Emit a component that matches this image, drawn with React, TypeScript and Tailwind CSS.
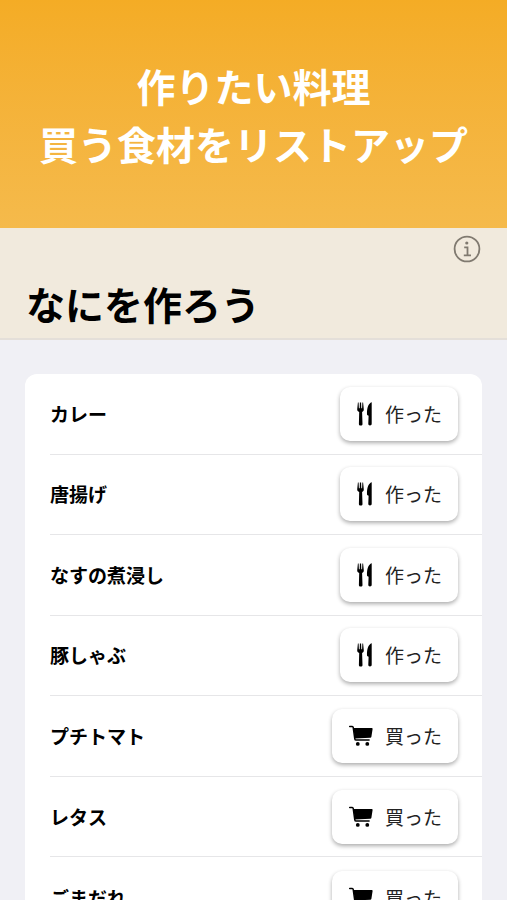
type Kind = "cook" | "buy";

const items: { name: string; kind: Kind }[] = [
  { name: "カレー", kind: "cook" },
  { name: "唐揚げ", kind: "cook" },
  { name: "なすの煮浸し", kind: "cook" },
  { name: "豚しゃぶ", kind: "cook" },
  { name: "プチトマト", kind: "buy" },
  { name: "レタス", kind: "buy" },
  { name: "ごまだれ", kind: "buy" },
];

function InfoIcon() {
  return (
    <svg viewBox="0 0 28 28" className="size-7" fill="none" stroke="currentColor" aria-hidden="true">
      <circle cx="14" cy="14" r="12.4" strokeWidth="1.8" />
      <circle cx="13.8" cy="8" r="1.6" fill="currentColor" stroke="none" />
      <path d="M11.2 12.3h3.3v8M10.8 20.4h7.200" strokeWidth="1.8" />
    </svg>
  );
}

function ForkKnifeIcon() {
  return (
    <svg viewBox="0 0 17 24" className="h-6 w-[17px]" fill="currentColor" aria-hidden="true">
      <path d="M1.900.6h.7l.3 5.600h.8L3.900.6h1.200l.2 5.600h.8L6.400.6h.7l.7 6.700c.1 1.400-.6 2.100-1.700 2.600l.4 12c0 1-.6 1.600-1.800 1.600s-1.800-.6-1.800-1.600l.3-12C2 9.400 1.100 8.700 1.200 7.300z" />
      <path d="M15.700.5v21.300c0 1.100-.6 1.700-1.700 1.700s-1.700-.6-1.700-1.700l.3-8-1.500-.8c-.4-4.800.4-10 3.200-12.100.6-.4 1.400-.8 1.400-.4z" />
    </svg>
  );
}

function CartIcon() {
  return (
    <svg viewBox="0 0 25 22" className="h-[22px] w-[25px]" aria-hidden="true">
      <path d="M5.300 3H23.800c.6 0 .9.300.8.900l-1.200 7.900c-.1.700-.5 1-1.200 1L7 13.400z" fill="currentColor" />
      <path
        d="M1.700 1.500h2.500c.6 0 .9.300 1 .9l1.600 11.400c.1.800.6 1.200 1.300 1.200h13"
        fill="none"
        stroke="currentColor"
        strokeWidth="1.5"
        strokeLinecap="round"
        strokeLinejoin="round"
      />
      <circle cx="9.800" cy="18.900" r="1.900" fill="currentColor" />
      <circle cx="19.300" cy="18.900" r="1.900" fill="currentColor" />
    </svg>
  );
}

function ActionButton({ kind }: { kind: Kind }) {
  return (
    <button
      type="button"
      className="flex h-[54px] items-center gap-3 rounded-[10px] bg-white px-4 text-[19px] leading-7 text-[#222] shadow-[0_2px_4px_rgba(0,0,0,0.33)]"
    >
      <span className="text-black">{kind === "cook" ? <ForkKnifeIcon /> : <CartIcon />}</span>
      {kind === "cook" ? "作った" : "買った"}
    </button>
  );
}

export default function App() {
  return (
    <div
      lang="ja"
      className="flex h-screen flex-col overflow-hidden bg-[#f0f0f5] font-['Noto_Sans_CJK_JP',sans-serif] text-black"
    >
      <section className="shrink-0 bg-linear-to-b from-[#f4ac25] to-[#f5ba4b] py-14 text-center text-[39px] leading-[58px] font-bold text-white">
        <p>作りたい料理</p>
        <p>買う食材をリストアップ</p>
      </section>
      <header className="flex shrink-0 flex-col border-b-2 border-[#e4dfd9] bg-[#f1eadd] px-[26px] pt-[7px] pb-1.5">
        <button type="button" aria-label="情報" className="self-end text-[#807a70]">
          <InfoIcon />
        </button>
        <h1 className="pt-[11px] text-[39px] leading-[58px] font-bold">なにを作ろう</h1>
      </header>
      <main className="shrink-0 px-[25px] pt-[34px]">
        <ul className="grid min-h-[564px] auto-rows-fr rounded-xl bg-white pl-[25px]">
          {items.map((item) => (
            <li
              key={item.name}
              className="flex items-center justify-between border-b border-[#e6e6e8] pr-6 last:border-b-0"
            >
              <span className="text-[19px] leading-7 font-bold">{item.name}</span>
              <ActionButton kind={item.kind} />
            </li>
          ))}
        </ul>
      </main>
    </div>
  );
}
